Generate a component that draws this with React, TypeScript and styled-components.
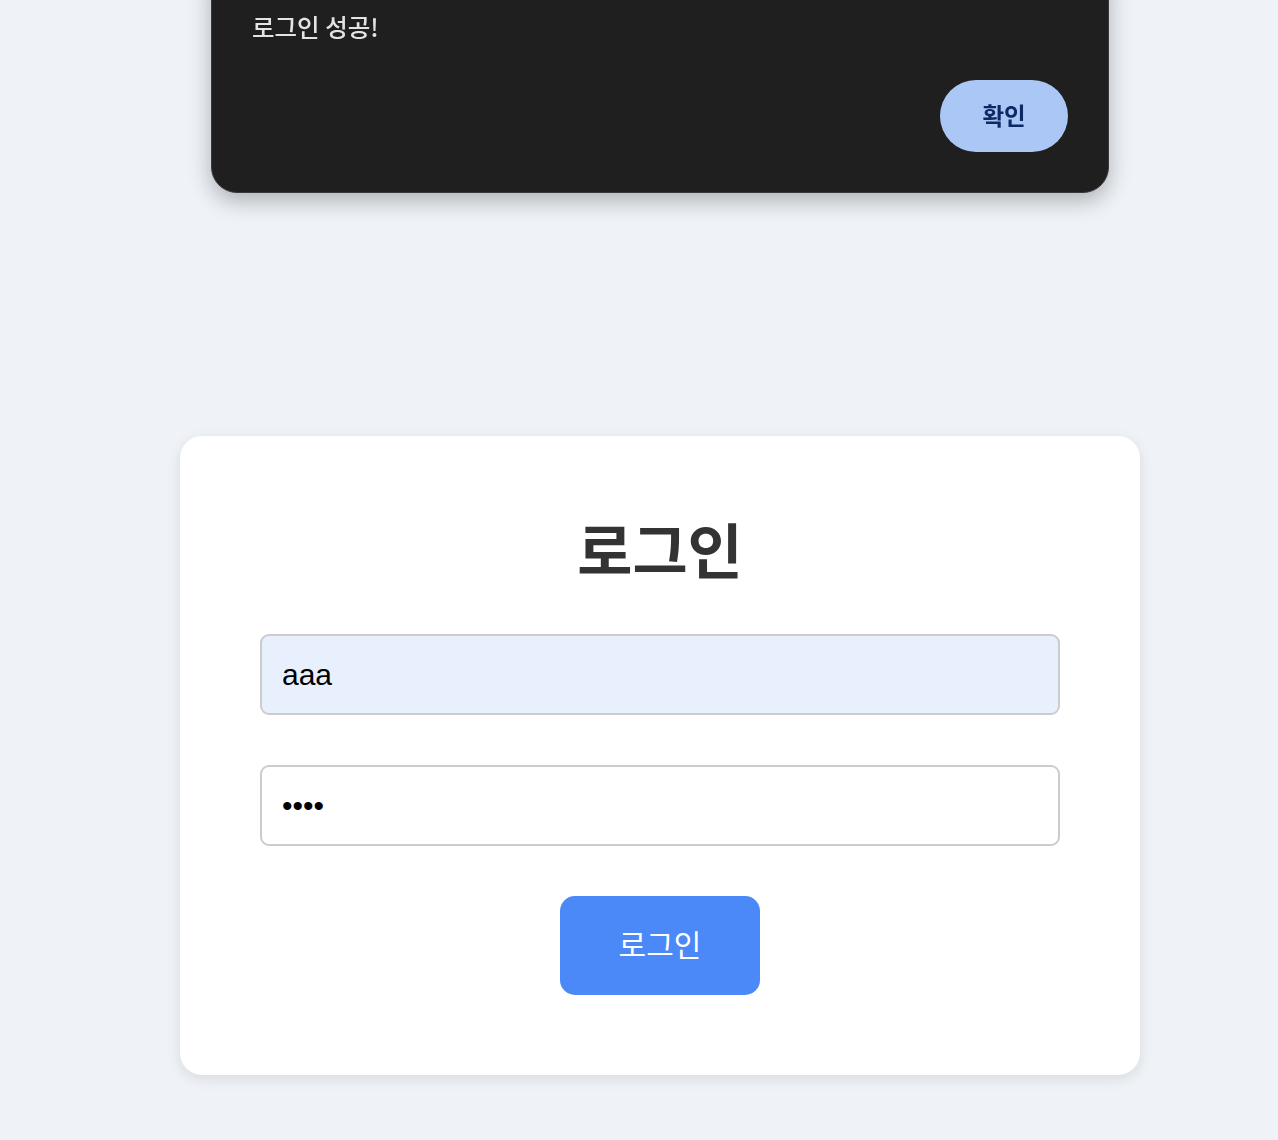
import React, { useState } from 'react'
import styled, { createGlobalStyle } from 'styled-components'

const GlobalStyle = createGlobalStyle`
    html, body {
        margin: 0;
        padding: 0;
        background: #eff3f8;
    }
    * {
        box-sizing: border-box;
    }
    body {
        font-family: 'Noto Sans CJK KR', 'Noto Sans', sans-serif;
    }
`

const Page = styled.div`
    display: flex;
    flex-direction: column;
    align-items: center;
    min-height: 100vh;
    padding: 436px 0 40px 42px;
`

const Card = styled.form`
    display: flex;
    flex-direction: column;
    align-items: center;
    width: 960px;
    padding: 80px;
    background: #ffffff;
    border-radius: 22px;
    box-shadow: 0 4px 14px rgba(0, 0, 0, 0.1);
`

const Title = styled.h1`
    margin: -4px 0 50px;
    font-family: 'Noto Sans CJK KR', sans-serif;
    font-size: 60px;
    line-height: 72px;
    font-weight: 700;
    color: #333333;
`

const Field = styled.input<{ $filled?: boolean }>`
    width: 100%;
    height: 81px;
    margin: 0 0 50px;
    padding: 0 20px;
    border: 2px solid #cccccc;
    border-radius: 9px;
    background: ${({ $filled }) => ($filled ? '#e8f0fe' : '#ffffff')};
    font-family: 'Liberation Sans', Arial, sans-serif;
    font-size: 30px;
    color: #000000;
    outline: none;
`

const SubmitButton = styled.button`
    width: 200px;
    height: 99px;
    padding: 0 0 6px;
    border: none;
    border-radius: 15px;
    background: #4a89f7;
    color: #ffffff;
    font-family: 'Noto Sans CJK KR', sans-serif;
    font-size: 30px;
    font-weight: 400;
    cursor: pointer;
`

const Dialog = styled.div`
    position: fixed;
    top: -30px;
    left: 211px;
    width: 898px;
    display: flex;
    flex-direction: column;
    padding: 40px 40px 40px;
    background: #1f1f1f;
    border: 1px solid #3a3a3a;
    border-radius: 0 0 26px 26px;
    box-shadow: 0 8px 22px rgba(0, 0, 0, 0.28);
`

const Message = styled.p`
    margin: 0 0 37px;
    font-family: 'Noto Sans CJK KR', sans-serif;
    font-size: 24.5px;
    line-height: 32px;
    font-weight: 500;
    color: #e3e3e3;
`

const Actions = styled.div`
    display: flex;
    justify-content: flex-end;
`

const ConfirmButton = styled.button`
    width: 128px;
    height: 72px;
    padding: 0 0 2px;
    border: none;
    border-radius: 36px;
    background: #aac7f5;
    color: #0d2a66;
    font-family: 'Noto Sans CJK KR', sans-serif;
    font-size: 23.5px;
    font-weight: 600;
    cursor: pointer;
`

export default function App() {
    const [id, setId] = useState('aaa')
    const [pw, setPw] = useState('aaaa')
    const [open, setOpen] = useState(true)

    return (
        <>
            <GlobalStyle />
            <Page>
                <Card onSubmit={(e) => e.preventDefault()}>
                    <Title>로그인</Title>
                    <Field
                        $filled
                        type='text'
                        value={id}
                        onChange={(e) => setId(e.target.value)}
                    />
                    <Field
                        type='password'
                        value={pw}
                        onChange={(e) => setPw(e.target.value)}
                    />
                    <SubmitButton type='submit'>로그인</SubmitButton>
                </Card>
            </Page>
            {open && (
                <Dialog role='dialog'>
                    <Message>로그인 성공!</Message>
                    <Actions>
                        <ConfirmButton onClick={() => setOpen(false)}>확인</ConfirmButton>
                    </Actions>
                </Dialog>
            )}
        </>
    )
}
